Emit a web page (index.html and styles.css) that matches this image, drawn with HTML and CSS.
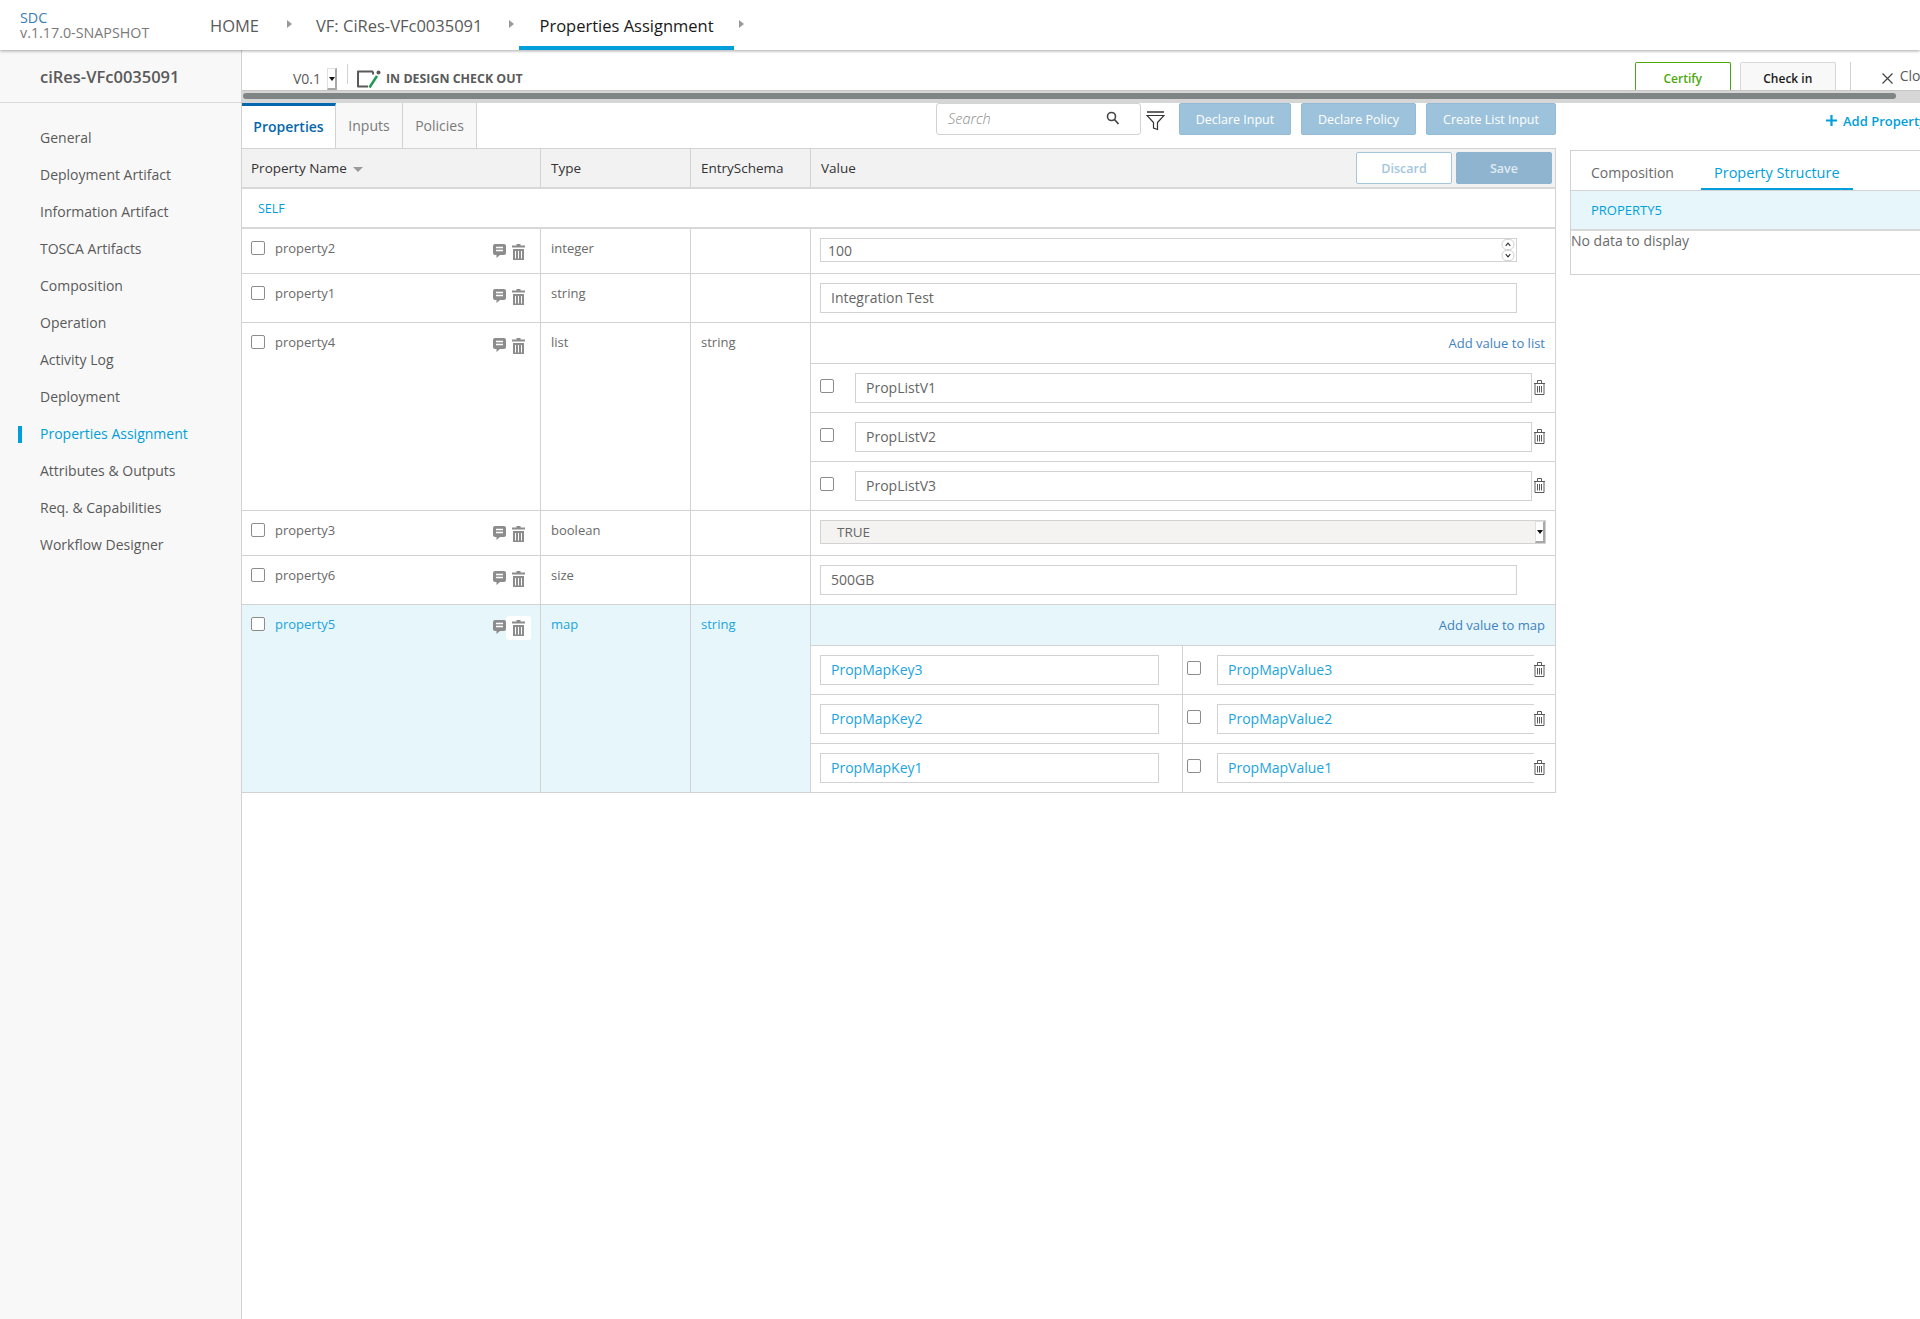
FILE: index.html
```html
<!DOCTYPE html>
<html lang="en">
<head>
    <meta charset="UTF-8">
    <title>SDC - Properties Assignment</title>
    <link rel="stylesheet" href="styles.css">
</head>
<body>
    <svg class="sprite" width="0" height="0">
        <symbol id="trash-solid" viewBox="0 0 13 16">
            <path fill="currentColor" d="M4.5 0h4v1.5h4.5v2H0v-2h4.5zM1 5h11v11H1z"/>
            <path fill="none" stroke="#fff" stroke-width="1" d="M3.5 7v7.5M6.5 7v7.5M9.5 7v7.5"/>
        </symbol>
        <symbol id="trash-line" viewBox="0 0 11 15">
            <path fill="none" stroke="currentColor" stroke-width="1" d="M0 3.500h11M3.500 3.500V.5h4v3M1 3.500v11h9v-11"/>
            <path fill="none" stroke="currentColor" stroke-width="1" d="M3.500 6v6.500M5.500 6v6.500M7.500 6v6.500"/>
        </symbol>
        <symbol id="comment" viewBox="0 0 13 14">
            <path fill="currentColor" d="M2 0h9a2 2 0 0 1 2 2v7a2 2 0 0 1-2 2H7l-3.500 3v-3H2a2 2 0 0 1-2-2V2a2 2 0 0 1 2-2z"/>
            <path fill="none" stroke="#fff" stroke-width="1.300" d="M3 3.500h7M3 6.500h7"/>
        </symbol>
    </svg>

    <header class="top-nav">
        <div class="brand">
            <div class="brand-name">SDC</div>
            <div class="brand-version">v.1.17.0-SNAPSHOT</div>
        </div>
        <nav class="crumbs">
            <a class="crumb crumb-home">HOME</a><i class="crumb-arrow"></i>
            <a class="crumb crumb-vf">VF: CiRes-VFc0035091</a><i class="crumb-arrow"></i>
            <a class="crumb crumb-active">Properties Assignment</a><i class="crumb-arrow"></i>
        </nav>
    </header>

    <div class="page">
        <aside class="side">
            <div class="side-title">ciRes-VFc0035091</div>
            <ul class="side-menu">
                <li>General</li>
                <li>Deployment Artifact</li>
                <li>Information Artifact</li>
                <li>TOSCA Artifacts</li>
                <li>Composition</li>
                <li>Operation</li>
                <li>Activity Log</li>
                <li>Deployment</li>
                <li class="active">Properties Assignment</li>
                <li>Attributes &amp; Outputs</li>
                <li>Req. &amp; Capabilities</li>
                <li>Workflow Designer</li>
            </ul>
        </aside>

        <main class="work">
            <div class="toolbar">
                <span class="version">V0.1</span>
                <span class="select-arrow"></span>
                <span class="tool-divider"></span>
                <svg class="state-icon" width="24" height="18" viewBox="0 0 24 18">
                    <path fill="none" stroke="#5a5a5a" stroke-width="2" stroke-linejoin="round" d="M16 1.500H1v15h10M16 1.500v3"/>
                    <circle cx="21.500" cy="2.500" r="2" fill="#5a5a5a"/>
                    <path fill="none" stroke="#1f9a55" stroke-width="2.500" d="M12.500 17.500 20 6"/>
                </svg>
                <span class="state-text">IN DESIGN CHECK OUT</span>
                <button class="btn-certify">Certify</button>
                <button class="btn-checkin">Check in</button>
                <span class="tool-divider tool-divider-right"></span>
                <svg class="close-x" width="11" height="11" viewBox="0 0 11 11">
                    <path fill="none" stroke="#444" stroke-width="1.200" d="m.5.5 10 10M10.500.5l-10 10"/>
                </svg>
                <span class="close-text">Close</span>
            </div>
            <div class="scrollbar"><div class="scroll-thumb"></div></div>

            <div class="content">
                <section class="left">
                    <div class="action-bar">
                        <div class="tab tab-active">Properties</div>
                        <div class="tab tab-inputs">Inputs</div>
                        <div class="tab tab-policies">Policies</div>
                        <div class="search">
                            <span class="search-text">Search</span>
                            <svg width="14" height="14" viewBox="0 0 14 14">
                                <circle cx="5.500" cy="5.500" r="4" fill="none" stroke="#444" stroke-width="1.600"/>
                                <path stroke="#444" stroke-width="1.800" d="m8.500 8.500 4 4.500"/>
                            </svg>
                        </div>
                        <svg class="filter" width="19" height="20" viewBox="0 0 19 20">
                            <path fill="none" stroke="#333" stroke-width="1.500" d="M1 1h17"/>
                            <path fill="none" stroke="#333" stroke-width="1.200" d="M1 4.500h17l-6.500 7v7l-4-1.500v-5.500z"/>
                        </svg>
                        <button class="btn-blue btn-input">Declare Input</button>
                        <button class="btn-blue btn-policy">Declare Policy</button>
                        <button class="btn-blue btn-list">Create List Input</button>
                    </div>

                    <div class="table">
                        <div class="row head">
                            <div class="cell">Property Name <i class="sort"></i></div>
                            <div class="cell">Type</div>
                            <div class="cell">EntrySchema</div>
                            <div class="cell cell-value-head">
                                <span>Value</span>
                                <button class="btn-discard">Discard</button>
                                <button class="btn-save">Save</button>
                            </div>
                        </div>
                        <div class="self-row">SELF</div>

                        <div class="row row-low">
                            <div class="cell cell-name">
                                <input type="checkbox" class="check">
                                <span>property2</span>
                                <svg class="ico-comment"><use href="#comment"/></svg>
                                <span class="ico-del"><svg><use href="#trash-solid"/></svg></span>
                            </div>
                            <div class="cell cell-text">integer</div>
                            <div class="cell cell-text"></div>
                            <div class="cell cell-val">
                                <div class="field field-num">100
                                    <span class="spin">
                                        <svg width="14" height="12" viewBox="0 0 14 12"><rect x=".5" y=".5" width="13" height="11" rx="5" fill="#fff" stroke="#ccc"/><path d="m4.500 7.500 2.500-3 2.500 3" fill="none" stroke="#333" stroke-width="1.200"/></svg>
                                        <svg width="14" height="12" viewBox="0 0 14 12"><rect x=".5" y=".5" width="13" height="11" rx="5" fill="#fff" stroke="#ccc"/><path d="m4.500 4.500 2.500 3 2.500-3" fill="none" stroke="#333" stroke-width="1.200"/></svg>
                                    </span>
                                </div>
                            </div>
                        </div>

                        <div class="row row-tall">
                            <div class="cell cell-name">
                                <input type="checkbox" class="check">
                                <span>property1</span>
                                <svg class="ico-comment"><use href="#comment"/></svg>
                                <span class="ico-del"><svg><use href="#trash-solid"/></svg></span>
                            </div>
                            <div class="cell cell-text">string</div>
                            <div class="cell cell-text"></div>
                            <div class="cell cell-val"><div class="field">Integration Test</div></div>
                        </div>

                        <div class="row">
                            <div class="cell cell-name">
                                <input type="checkbox" class="check">
                                <span>property4</span>
                                <svg class="ico-comment"><use href="#comment"/></svg>
                                <span class="ico-del"><svg><use href="#trash-solid"/></svg></span>
                            </div>
                            <div class="cell cell-text">list</div>
                            <div class="cell cell-text">string</div>
                            <div class="cell cell-nested">
                                <div class="add-line"><a>Add value to list</a></div>
                                <div class="sub-row">
                                    <input type="checkbox" class="check check-sub">
                                    <div class="field">PropListV1</div>
                                    <svg class="ico-trash"><use href="#trash-line"/></svg>
                                </div>
                                <div class="sub-row">
                                    <input type="checkbox" class="check check-sub">
                                    <div class="field">PropListV2</div>
                                    <svg class="ico-trash"><use href="#trash-line"/></svg>
                                </div>
                                <div class="sub-row">
                                    <input type="checkbox" class="check check-sub">
                                    <div class="field">PropListV3</div>
                                    <svg class="ico-trash"><use href="#trash-line"/></svg>
                                </div>
                            </div>
                        </div>

                        <div class="row row-low">
                            <div class="cell cell-name">
                                <input type="checkbox" class="check">
                                <span>property3</span>
                                <svg class="ico-comment"><use href="#comment"/></svg>
                                <span class="ico-del"><svg><use href="#trash-solid"/></svg></span>
                            </div>
                            <div class="cell cell-text">boolean</div>
                            <div class="cell cell-text"></div>
                            <div class="cell cell-val">
                                <div class="field field-select">TRUE<span class="select-arrow"></span></div>
                            </div>
                        </div>

                        <div class="row row-tall">
                            <div class="cell cell-name">
                                <input type="checkbox" class="check">
                                <span>property6</span>
                                <svg class="ico-comment"><use href="#comment"/></svg>
                                <span class="ico-del"><svg><use href="#trash-solid"/></svg></span>
                            </div>
                            <div class="cell cell-text">size</div>
                            <div class="cell cell-text"></div>
                            <div class="cell cell-val"><div class="field">500GB</div></div>
                        </div>

                        <div class="row row-selected">
                            <div class="cell cell-name">
                                <input type="checkbox" class="check">
                                <span>property5</span>
                                <svg class="ico-comment"><use href="#comment"/></svg>
                                <span class="ico-del ico-del-on"><svg><use href="#trash-solid"/></svg></span>
                            </div>
                            <div class="cell cell-text">map</div>
                            <div class="cell cell-text">string</div>
                            <div class="cell cell-nested">
                                <div class="add-line"><a>Add value to map</a></div>
                                <div class="sub-row sub-map">
                                    <div class="map-key"><div class="field">PropMapKey3</div></div>
                                    <div class="map-val">
                                        <input type="checkbox" class="check check-sub">
                                        <div class="field field-open">PropMapValue3</div>
                                        <svg class="ico-trash"><use href="#trash-line"/></svg>
                                    </div>
                                </div>
                                <div class="sub-row sub-map">
                                    <div class="map-key"><div class="field">PropMapKey2</div></div>
                                    <div class="map-val">
                                        <input type="checkbox" class="check check-sub">
                                        <div class="field field-open">PropMapValue2</div>
                                        <svg class="ico-trash"><use href="#trash-line"/></svg>
                                    </div>
                                </div>
                                <div class="sub-row sub-map">
                                    <div class="map-key"><div class="field">PropMapKey1</div></div>
                                    <div class="map-val">
                                        <input type="checkbox" class="check check-sub">
                                        <div class="field field-open">PropMapValue1</div>
                                        <svg class="ico-trash"><use href="#trash-line"/></svg>
                                    </div>
                                </div>
                            </div>
                        </div>
                    </div>
                </section>

                <section class="right">
                    <div class="add-prop">
                        <svg class="plus" width="11" height="11" viewBox="0 0 11 11"><path stroke="#009fdb" stroke-width="2.200" d="M5.500 0v11M0 5.500h11"/></svg>
                        <span>Add Property</span>
                    </div>
                    <div class="panel">
                        <div class="panel-tabs">
                            <div class="panel-tab">Composition</div>
                            <div class="panel-tab panel-tab-on">Property Structure</div>
                        </div>
                        <div class="panel-head">PROPERTY5</div>
                        <div class="panel-empty">No data to display</div>
                    </div>
                </section>
            </div>
        </main>
    </div>
</body>
</html>
```

FILE: styles.css
```css
* {
    box-sizing: border-box;
}
html, body {
    margin: 0;
    height: 100%;
    overflow: hidden;
}
body {
    font-family: "Open Sans", sans-serif;
    font-size: 13px;
    color: #5a5a5a;
    background: #fff;
}
button {
    font-family: inherit;
    cursor: pointer;
}
.sprite {
    position: absolute;
}

/* top header */
.top-nav {
    height: 50px;
    display: flex;
    position: relative;
    z-index: 2;
    background: #fff;
    box-shadow: 0 1px 3px rgba(0,0,0,0.35);
}
.brand {
    width: 210px;
    padding: 10px 0 0 20px;
    font-size: 14.3px;
    line-height: 15px;
}
.brand-name {
    color: #3a7cb8;
}
.brand-version {
    color: #7a7a7a;
    white-space: nowrap;
}
.crumbs {
    display: flex;
    align-items: stretch;
}
.crumb {
    font-size: 16.5px;
    line-height: 52px;
    color: #5a5a5a;
}
.crumb-arrow {
    width: 0;
    height: 0;
    margin-top: 20px;
    border-left: 5px solid #9a9a9a;
    border-top: 4px solid transparent;
    border-bottom: 4px solid transparent;
}
.crumb-home {
    margin-right: 28px;
}
.crumb-vf {
    margin-left: 24px;
    padding-right: 27px;
}
.crumb-active {
    margin: 0 5px;
    padding: 0 20px;
    color: #191919;
    font-weight: 500;
    border-bottom: 4px solid #009fdb;
}

/* sidebar */
.page {
    display: flex;
    height: calc(100% - 50px);
}
.side {
    width: 242px;
    flex: none;
    background: #f8f8f8;
    border-right: 1px solid #d2d2d2;
}
.side-title {
    height: 53px;
    padding-left: 40px;
    font-size: 16.5px;
    font-weight: 600;
    line-height: 54px;
    border-bottom: 1px solid #d8d8d8;
}
.side-menu {
    list-style: none;
    margin: 0;
    padding: 17px 0 0 40px;
    font-size: 14px;
}
.side-menu li {
    height: 37px;
    line-height: 36px;
    position: relative;
}
.side-menu li.active {
    color: #009fdb;
}
.side-menu li.active::before {
    content: "";
    position: absolute;
    left: -22px;
    top: 10px;
    width: 4px;
    height: 17px;
    background: #009fdb;
}

/* toolbar above the scrollbar */
.work {
    flex: 1;
    min-width: 0;
    overflow: hidden;
}
.toolbar {
    width: 1700px;
    height: 40px;
    display: flex;
    align-items: flex-start;
    padding-left: 51px;
    white-space: nowrap;
}
.version {
    margin-top: 18px;
    font-size: 14px;
    line-height: 21px;
    width: 34px;
}
.select-arrow {
    display: block;
    flex: none;
    width: 10px;
    height: 22px;
    position: relative;
    background: #fff;
    border: 1px solid #e0e0e0;
    border-right: 2px solid #a8a8a8;
    border-bottom: 2px solid #a8a8a8;
}
.select-arrow::after {
    content: "";
    position: absolute;
    left: 1px;
    top: 8px;
    border-top: 4px solid #111;
    border-left: 3px solid transparent;
    border-right: 3px solid transparent;
}
.toolbar > .select-arrow {
    margin-top: 18px;
}
.tool-divider {
    width: 1px;
    height: 20px;
    margin: 14px 9px 0 10px;
    background: #d2d2d2;
}
.state-icon {
    margin-top: 20px;
    flex: none;
}
.state-text {
    margin: 19px 0 0 5px;
    font-size: 12.4px;
    font-weight: 700;
    line-height: 19px;
}
.btn-certify, .btn-checkin {
    width: 96px;
    height: 28px;
    margin-top: 12px;
    padding: 3px 0 0;
    font-size: 12px;
    font-weight: 600;
    border-radius: 2px 2px 0 0;
}
.btn-certify {
    margin-left: 1112px;
    background: #fff;
    color: #4ca90c;
    border: 1px solid #4ca90c;
    border-bottom: 0;
}
.btn-checkin {
    margin-left: 9px;
    background: #f8f8f8;
    color: #191919;
    border: 1px solid #d8d8d8;
    border-bottom: 0;
}
.tool-divider-right {
    height: 28px;
    margin: 12px 31px 0 14px;
}
.close-x {
    flex: none;
    margin: 23px 7px 0 0;
}
.close-text {
    margin-top: 16px;
    font-size: 14px;
    line-height: 20px;
}
.scrollbar {
    height: 13px;
    padding: 2px 24px 4px 1px;
    background: #d6d6d6;
    border-top: 1px solid #c8c6c2;
}
.scroll-thumb {
    height: 6px;
    border-radius: 3px;
    background: #7f8484;
}

/* main area */
.content {
    display: flex;
}
.left {
    width: 1314px;
    flex: none;
}
.action-bar {
    height: 45px;
    display: flex;
    align-items: flex-start;
}
.tab {
    height: 45px;
    font-size: 14px;
    line-height: 46px;
    text-align: center;
    color: #7a7a7a;
    background: #f8f8f8;
    border-right: 1px solid #d2d2d2;
}
.tab-active {
    width: 94px;
    line-height: 42px;
    color: #0568ae;
    font-weight: 600;
    background: #fff;
    border-top: 3px solid #0568ae;
}
.tab-inputs {
    width: 67px;
}
.tab-policies {
    width: 74px;
}
.search {
    width: 205px;
    height: 32px;
    margin-left: 459px;
    padding: 0 20px 2px 11px;
    display: flex;
    align-items: center;
    justify-content: space-between;
    border: 1px solid #d2d2d2;
    border-radius: 3px;
}
.search-text {
    font-size: 14.5px;
    font-style: italic;
    font-weight: 300;
    color: #8c8c8c;
}
.filter {
    margin: 8px 0 0 5px;
    flex: none;
}
.btn-blue {
    height: 32px;
    padding: 0;
    font-size: 12.5px;
    font-weight: 500;
    color: #fff;
    background: #9dc3dc;
    border: 1px solid #93bbd6;
    border-radius: 2px;
}
.btn-input {
    width: 112px;
    margin-left: 14px;
}
.btn-policy {
    width: 115px;
    margin-left: 10px;
}
.btn-list {
    width: 130px;
    margin-left: 10px;
}

/* table */
.row {
    display: grid;
    grid-template-columns: 299px 150px 120px 745px;
    border-bottom: 1px solid #d2d2d2;
}
.cell {
    border-right: 1px solid #d2d2d2;
}
.head {
    height: 41px;
    background: #f2f2f2;
    border-top: 1px solid #d2d2d2;
    border-bottom: 2px solid #d8d8d8;
    color: #333;
    font-size: 13.5px;
}
.head .cell {
    padding-left: 10px;
    line-height: 38px;
}
.head .cell:first-child {
    padding-left: 9px;
}
.sort {
    display: inline-block;
    margin-left: 3px;
    vertical-align: 1px;
    border-top: 5px solid #9a9a9a;
    border-left: 5px solid transparent;
    border-right: 5px solid transparent;
}
.cell-value-head {
    display: flex;
    align-items: flex-start;
}
.cell-value-head span {
    margin-right: auto;
}
.btn-discard, .btn-save {
    width: 96px;
    height: 32px;
    margin: 3px 0 0 4px;
    padding: 0;
    font-size: 12.5px;
    font-weight: 600;
    border-radius: 2px;
}
.btn-discard {
    background: #fff;
    color: #a3c6dd;
    border: 1px solid #a3c6dd;
}
.btn-save {
    margin-right: 3px;
    background: #8fb4cf;
    color: #dfeaf2;
    border: 1px solid #8fb4cf;
}
.self-row {
    height: 40px;
    padding-left: 16px;
    line-height: 39px;
    font-size: 12.5px;
    color: #009fdb;
    border-right: 1px solid #d2d2d2;
    border-bottom: 2px solid #d8d8d8;
}
.row-low {
    height: 45px;
}
.row-tall {
    height: 49px;
}
.cell-name {
    display: flex;
    align-items: flex-start;
    padding: 12px 15px 0 9px;
    line-height: 15px;
    color: #6a6a6a;
}
.cell-text {
    padding: 12px 0 0 10px;
    line-height: 15px;
    color: #6a6a6a;
}
.cell-val {
    padding: 9px 0 0 9px;
}
.check {
    appearance: none;
    width: 14px;
    height: 14px;
    flex: none;
    margin: 0 10px 0 0;
    background: #fff;
    border: 1px solid #8c8c8c;
    border-radius: 2px;
}
.ico-comment {
    width: 13px;
    height: 14px;
    margin: 3px 0 0 auto;
    color: #8c8c8c;
}
.ico-del {
    display: block;
    margin: 3px 0 0 6px;
    height: 16px;
    color: #8c8c8c;
}
.ico-del svg {
    display: block;
    width: 13px;
    height: 16px;
}
.ico-del-on {
    margin: -1px -6px 0 0;
    padding: 4px 6px;
    height: 24px;
    width: 25px;
    background: #fff;
    border-radius: 3px;
}
.field {
    height: 30px;
    width: 697px;
    padding-left: 10px;
    font-size: 14px;
    line-height: 28px;
    background: #fff;
    color: #666;
    border: 1px solid #d2d2d2;
}
.field-num {
    height: 24px;
    padding-left: 7px;
    line-height: 23px;
    display: flex;
    justify-content: space-between;
    padding-right: 1px;
}
.spin {
    display: flex;
    flex-direction: column;
    height: 22px;
}
.spin svg {
    display: block;
    height: 11px;
}
.field-select {
    height: 24px;
    width: 726px;
    display: flex;
    justify-content: space-between;
    padding-left: 16px;
    line-height: 22px;
    background: #f4f3f1;
    font-size: 13.5px;
}
.cell-nested {
    min-width: 0;
}
.add-line {
    height: 41px;
    padding-right: 10px;
    text-align: right;
    line-height: 40px;
    border-bottom: 1px solid #d2d2d2;
}
.add-line a {
    color: #3f82bf;
}
.sub-row {
    height: 49px;
    display: flex;
    align-items: flex-start;
    padding: 9px 10px 0 9px;
    background: #fff;
    border-bottom: 1px solid #d2d2d2;
}
.sub-row:last-child {
    height: 48px;
    border-bottom: 0;
}
.check-sub {
    margin: 6px 21px 0 0;
}
.sub-row .field {
    flex: 1;
    width: auto;
}
.ico-trash {
    width: 11px;
    height: 15px;
    flex: none;
    margin: 7px 0 0 2px;
    color: #5a5a5a;
}
.sub-map {
    padding: 0;
    display: grid;
    grid-template-columns: 372px 1fr;
}
.map-key {
    height: 100%;
    padding: 9px 23px 0 9px;
    border-right: 1px solid #d2d2d2;
}
.map-val {
    display: flex;
    align-items: flex-start;
    padding: 9px 10px 0 4px;
}
.field-open {
    border-right: 0;
}
.map-val .check-sub {
    margin: 6px 16px 0 0;
}
.map-val .ico-trash {
    margin-left: 0;
}
.sub-map .field {
    color: #1ba4de;
}
.map-key .field {
    width: 100%;
}

/* selected property row */
.row-selected {
    background: #e6f6fb;
}
.row-selected .cell-name > span:nth-of-type(1),
.row-selected .cell-text {
    color: #1ba4de;
}

/* right panel */
.right {
    width: 350px;
    margin-left: 14px;
    flex: none;
}
.add-prop {
    height: 47px;
    padding: 7px 0 0 256px;
    display: flex;
    align-items: flex-start;
    white-space: nowrap;
    font-size: 13px;
    font-weight: 600;
    line-height: 22px;
    color: #009fdb;
}
.plus {
    flex: none;
    margin: 5px 6px 0 0;
}
.panel {
    height: 125px;
    border-left: 1px solid #d2d2d2;
    border-top: 1px solid #d2d2d2;
    border-bottom: 1px solid #d2d2d2;
}
.panel-tabs {
    height: 39px;
    display: flex;
    font-size: 14px;
}
.panel-tab {
    padding: 11px 0 0 20px;
    width: 130px;
    line-height: 21px;
    color: #6a6a6a;
}
.panel-tab-on {
    width: 152px;
    padding-left: 13px;
    font-size: 14.5px;
    color: #009fdb;
    font-weight: 500;
    border-bottom: 2px solid #009fdb;
}
.panel-head {
    height: 41px;
    padding-left: 20px;
    line-height: 38px;
    font-size: 13px;
    color: #009fdb;
    background: #e6f6fb;
    border-top: 1px solid #d2d2d2;
    border-bottom: 2px solid #d8d8d8;
}
.panel-empty {
    font-size: 14px;
    line-height: 20px;
    color: #6a6a6a;
}
```
